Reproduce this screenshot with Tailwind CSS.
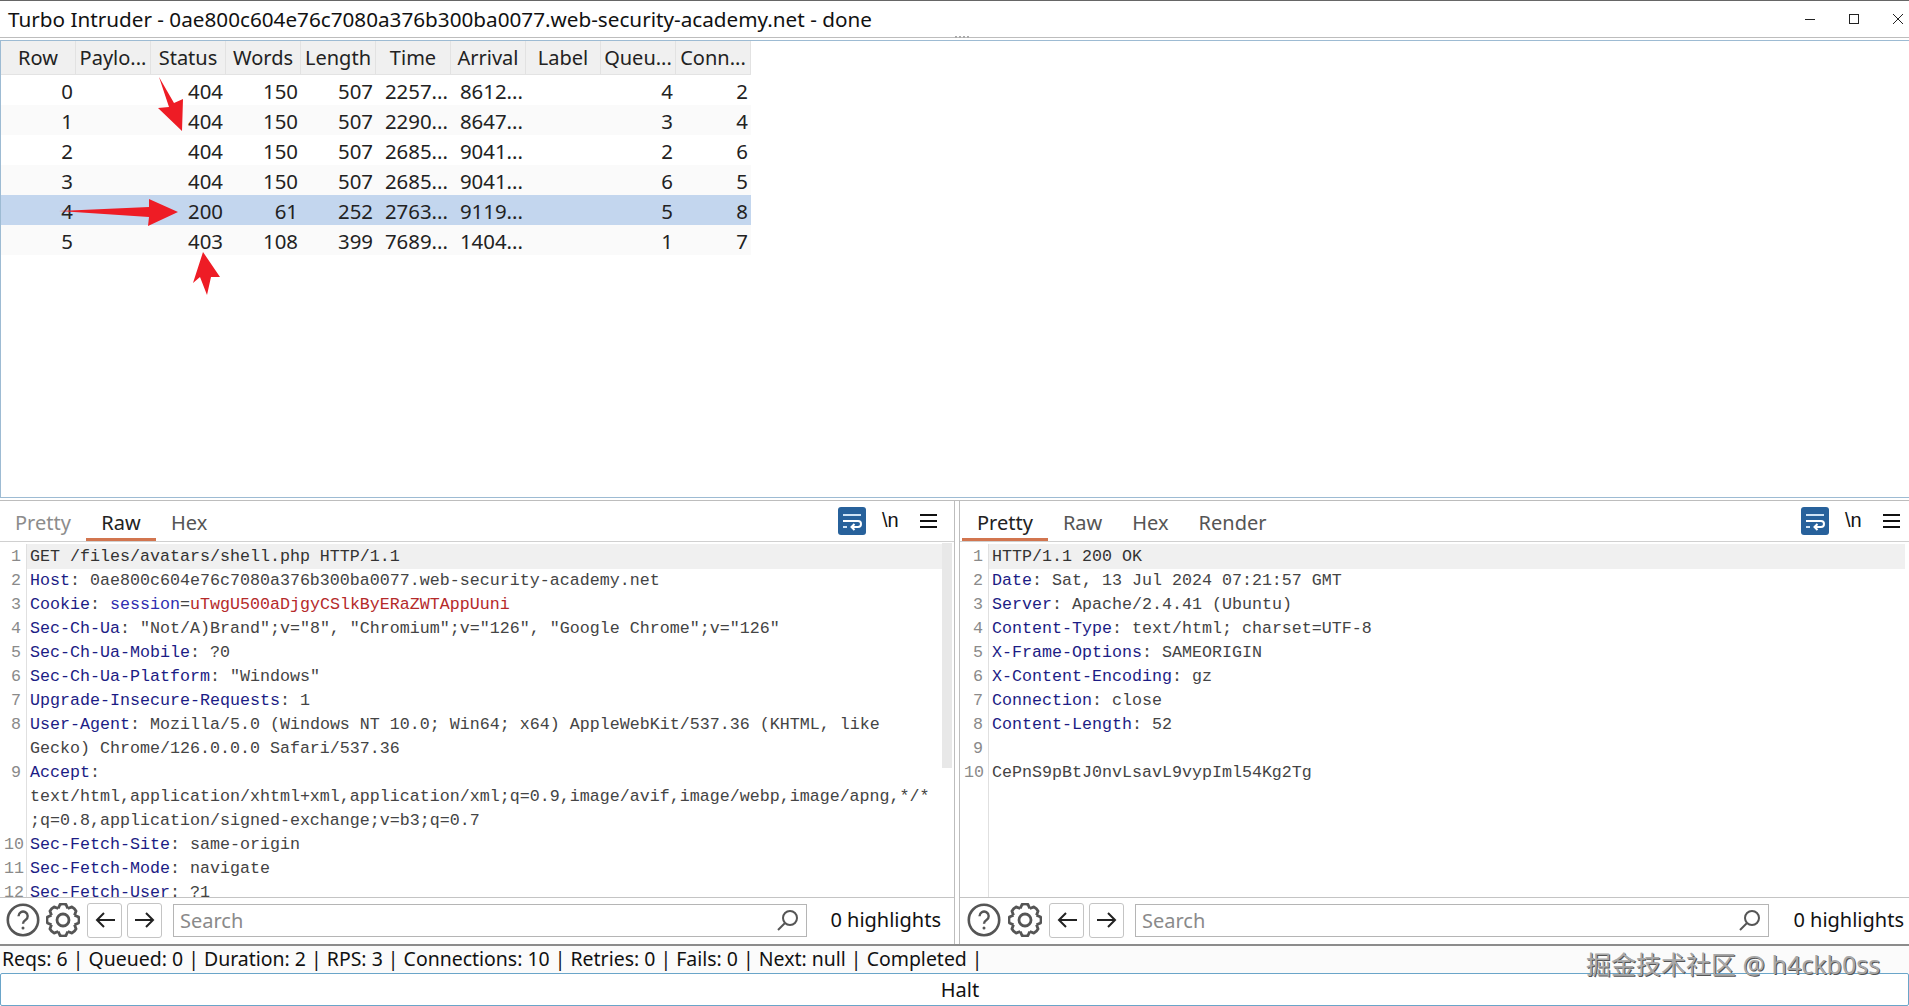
<!DOCTYPE html>
<html lang="en">
<head>
<meta charset="UTF-8">
<title>Turbo Intruder</title>
<script src="https://cdn.jsdelivr.net/npm/@tailwindcss/browser@4"></script>
</head>
<body class="bg-white text-black overflow-hidden">
<!-- shared icons -->
<svg class="hidden">
  <defs>
    <path id="tooth" d="M-4.8-11.5-2.9-15.6Q0-16.6 2.9-15.6L4.8-11.5" />
  </defs>
</svg>

<div class="relative w-[1909px] h-[1006px] flex flex-col overflow-hidden font-['Noto_Sans',sans-serif] text-[20px] leading-none">

  <!-- Title bar -->
  <header class="h-[38px] shrink-0 flex items-center justify-between border-t border-t-[#666] border-b border-b-[#bdbdbd] pl-2 pr-[6px] relative">
    <span class="text-[#111] text-[20.7px]">Turbo Intruder - 0ae800c604e76c7080a376b300ba0077.web-security-academy.net - done</span>
    <div class="flex items-center gap-[34px]">
      <svg class="w-[10px] h-[10px]" viewBox="0 0 10 10" fill="none" stroke="#222" stroke-width="1"><path d="M0 5.5h10"/></svg>
      <svg class="w-[10px] h-[10px]" viewBox="0 0 10 10" fill="none" stroke="#222" stroke-width="1"><rect x=".5" y=".5" width="9" height="9"/></svg>
      <svg class="w-[10px] h-[10px]" viewBox="0 0 10 10" fill="none" stroke="#222" stroke-width="1"><path d="M0 0l10 10M10 0L0 10"/></svg>
    </div>
    <div class="absolute left-[955px] -bottom-[1px] flex gap-[2px]">
      <i class="block w-[2px] h-[2px] bg-[#aaa]"></i><i class="block w-[2px] h-[2px] bg-[#aaa]"></i><i class="block w-[2px] h-[2px] bg-[#aaa]"></i><i class="block w-[2px] h-[2px] bg-[#aaa]"></i>
    </div>
  </header>

  <!-- Results table -->
  <section class="mt-[2px] h-[458px] shrink-0 border-l border-t border-b border-[#9dbbd3] relative">
    <div class="w-[750px] grid grid-cols-[repeat(10,75px)] h-[34px] bg-[#f0f0f0] border-b border-[#e3e3e3] text-center text-[#222] items-center">
      <div class="h-full flex items-center justify-center border-r border-[#e2e2e2]">Row</div>
      <div class="h-full flex items-center justify-center border-r border-[#e2e2e2]">Paylo...</div>
      <div class="h-full flex items-center justify-center border-r border-[#e2e2e2]">Status</div>
      <div class="h-full flex items-center justify-center border-r border-[#e2e2e2]">Words</div>
      <div class="h-full flex items-center justify-center border-r border-[#e2e2e2]">Length</div>
      <div class="h-full flex items-center justify-center border-r border-[#e2e2e2]">Time</div>
      <div class="h-full flex items-center justify-center border-r border-[#e2e2e2]">Arrival</div>
      <div class="h-full flex items-center justify-center border-r border-[#e2e2e2]">Label</div>
      <div class="h-full flex items-center justify-center border-r border-[#e2e2e2]">Queu...</div>
      <div class="h-full flex items-center justify-center border-r border-[#e2e2e2]">Conn...</div>
    </div>
    <div class="w-[750px] text-[#222] text-[20.4px]">
      <div class="grid grid-cols-[repeat(10,75px)] h-[30px] items-center text-right pt-[2px]">
        <div class="pr-[3px]">0</div><div></div><div class="pr-[3px]">404</div><div class="pr-[3px]">150</div><div class="pr-[3px]">507</div><div class="pr-[3px]">2257...</div><div class="pr-[3px]">8612...</div><div></div><div class="pr-[3px]">4</div><div class="pr-[3px]">2</div>
      </div>
      <div class="grid grid-cols-[repeat(10,75px)] h-[30px] items-center text-right pt-[2px] bg-[#fafafa]">
        <div class="pr-[3px]">1</div><div></div><div class="pr-[3px]">404</div><div class="pr-[3px]">150</div><div class="pr-[3px]">507</div><div class="pr-[3px]">2290...</div><div class="pr-[3px]">8647...</div><div></div><div class="pr-[3px]">3</div><div class="pr-[3px]">4</div>
      </div>
      <div class="grid grid-cols-[repeat(10,75px)] h-[30px] items-center text-right pt-[2px]">
        <div class="pr-[3px]">2</div><div></div><div class="pr-[3px]">404</div><div class="pr-[3px]">150</div><div class="pr-[3px]">507</div><div class="pr-[3px]">2685...</div><div class="pr-[3px]">9041...</div><div></div><div class="pr-[3px]">2</div><div class="pr-[3px]">6</div>
      </div>
      <div class="grid grid-cols-[repeat(10,75px)] h-[30px] items-center text-right pt-[2px] bg-[#fafafa]">
        <div class="pr-[3px]">3</div><div></div><div class="pr-[3px]">404</div><div class="pr-[3px]">150</div><div class="pr-[3px]">507</div><div class="pr-[3px]">2685...</div><div class="pr-[3px]">9041...</div><div></div><div class="pr-[3px]">6</div><div class="pr-[3px]">5</div>
      </div>
      <div class="grid grid-cols-[repeat(10,75px)] h-[30px] items-center text-right pt-[2px] bg-[#c3d6ee]">
        <div class="pr-[3px]">4</div><div></div><div class="pr-[3px]">200</div><div class="pr-[3px]">61</div><div class="pr-[3px]">252</div><div class="pr-[3px]">2763...</div><div class="pr-[3px]">9119...</div><div></div><div class="pr-[3px]">5</div><div class="pr-[3px]">8</div>
      </div>
      <div class="grid grid-cols-[repeat(10,75px)] h-[30px] items-center text-right pt-[2px] bg-[#fafafa]">
        <div class="pr-[3px]">5</div><div></div><div class="pr-[3px]">403</div><div class="pr-[3px]">108</div><div class="pr-[3px]">399</div><div class="pr-[3px]">7689...</div><div class="pr-[3px]">1404...</div><div></div><div class="pr-[3px]">1</div><div class="pr-[3px]">7</div>
      </div>
    </div>
  </section>

  <!-- Request / response panes -->
  <div class="mt-[2px] h-[444px] shrink-0 flex border-t border-[#bdbdbd]">

    <!-- Request -->
    <div class="w-[955px] shrink-0 flex flex-col border-r border-[#bdbdbd]">
      <div class="h-[41px] shrink-0 flex items-center justify-between border-b border-[#d0d0d0] pr-[17px]">
        <div class="flex h-full">
          <span class="w-[86px] pl-[15px] flex items-center text-[#8c8c8c] pt-[4px]">Pretty</span>
          <span class="w-[70px] justify-center flex items-center text-[#222] border-b-[3px] border-[#d2754f] pt-[7px]">Raw</span>
          <span class="w-[70px] pl-[15px] flex items-center text-[#555] pt-[4px]">Hex</span>
        </div>
        <div class="flex items-center">
          <svg class="w-[28px] h-[28px]" viewBox="0 0 28 28" fill="none">
            <rect width="28" height="28" rx="3" fill="#27619b"/>
            <path d="M5 8h18" stroke="#cfe3f5" stroke-width="2"/>
            <path d="M5 14h15a3 3 0 0 1 0 6h-6M16.5 17l-3 3 3 3" stroke="#fff" stroke-width="2"/>
            <path d="M5 20h4" stroke="#cfe3f5" stroke-width="2"/>
          </svg>
          <span class="ml-[16px] w-[23px] font-['Liberation_Sans',sans-serif] pb-[3px] text-[#111]">\n</span>
          <svg class="ml-[15px] w-[17px] h-[14px]" viewBox="0 0 17 14" stroke="#111" stroke-width="2"><path d="M0 1h17M0 7h17M0 13h17"/></svg>
        </div>
      </div>

      <div class="flex-1 flex min-h-0 pr-[2px] overflow-hidden font-['Liberation_Mono',monospace] text-[16.67px] leading-[24px] text-[#444]">
        <div class="flex-1 min-w-0 pt-[2px]">
          <div class="flex"><span class="w-[27px] shrink-0 pr-[5px] pt-[1px] text-right text-[#8a8a8a] border-r border-[#e0e0e0]">1</span><span class="flex-1 pl-[3px] pt-[1px] bg-[#f0f0f0] text-[#333]">GET /files/avatars/shell.php HTTP/1.1</span></div>
          <div class="flex"><span class="w-[27px] shrink-0 pr-[5px] text-right text-[#8a8a8a] border-r border-[#e0e0e0]">2</span><span class="flex-1 pl-[3px]"><b class="font-normal text-[#1c1c85]">Host</b>: 0ae800c604e76c7080a376b300ba0077.web-security-academy.net</span></div>
          <div class="flex"><span class="w-[27px] shrink-0 pr-[5px] text-right text-[#8a8a8a] border-r border-[#e0e0e0]">3</span><span class="flex-1 pl-[3px]"><b class="font-normal text-[#1c1c85]">Cookie</b>: <b class="font-normal text-[#2e2eb0]">session</b>=<b class="font-normal text-[#b52a2a]">uTwgU500aDjgyCSlkByERaZWTAppUuni</b></span></div>
          <div class="flex"><span class="w-[27px] shrink-0 pr-[5px] text-right text-[#8a8a8a] border-r border-[#e0e0e0]">4</span><span class="flex-1 pl-[3px]"><b class="font-normal text-[#1c1c85]">Sec-Ch-Ua</b>: "Not/A)Brand";v="8", "Chromium";v="126", "Google Chrome";v="126"</span></div>
          <div class="flex"><span class="w-[27px] shrink-0 pr-[5px] text-right text-[#8a8a8a] border-r border-[#e0e0e0]">5</span><span class="flex-1 pl-[3px]"><b class="font-normal text-[#1c1c85]">Sec-Ch-Ua-Mobile</b>: ?0</span></div>
          <div class="flex"><span class="w-[27px] shrink-0 pr-[5px] text-right text-[#8a8a8a] border-r border-[#e0e0e0]">6</span><span class="flex-1 pl-[3px]"><b class="font-normal text-[#1c1c85]">Sec-Ch-Ua-Platform</b>: "Windows"</span></div>
          <div class="flex"><span class="w-[27px] shrink-0 pr-[5px] text-right text-[#8a8a8a] border-r border-[#e0e0e0]">7</span><span class="flex-1 pl-[3px]"><b class="font-normal text-[#1c1c85]">Upgrade-Insecure-Requests</b>: 1</span></div>
          <div class="flex"><span class="w-[27px] shrink-0 pr-[5px] text-right text-[#8a8a8a] border-r border-[#e0e0e0]">8</span><span class="flex-1 pl-[3px]"><b class="font-normal text-[#1c1c85]">User-Agent</b>: Mozilla/5.0 (Windows NT 10.0; Win64; x64) AppleWebKit/537.36 (KHTML, like<br>Gecko) Chrome/126.0.0.0 Safari/537.36</span></div>
          <div class="flex"><span class="w-[27px] shrink-0 pr-[5px] text-right text-[#8a8a8a] border-r border-[#e0e0e0]">9</span><span class="flex-1 pl-[3px]"><b class="font-normal text-[#1c1c85]">Accept</b>:<br>text/html,application/xhtml+xml,application/xml;q=0.9,image/avif,image/webp,image/apng,*/*<br>;q=0.8,application/signed-exchange;v=b3;q=0.7</span></div>
          <div class="flex"><span class="w-[27px] shrink-0 pr-[2px] text-right text-[#8a8a8a] border-r border-[#e0e0e0]">10</span><span class="flex-1 pl-[3px]"><b class="font-normal text-[#1c1c85]">Sec-Fetch-Site</b>: same-origin</span></div>
          <div class="flex"><span class="w-[27px] shrink-0 pr-[2px] text-right text-[#8a8a8a] border-r border-[#e0e0e0]">11</span><span class="flex-1 pl-[3px]"><b class="font-normal text-[#1c1c85]">Sec-Fetch-Mode</b>: navigate</span></div>
          <div class="flex"><span class="w-[27px] shrink-0 pr-[2px] text-right text-[#8a8a8a] border-r border-[#e0e0e0]">12</span><span class="flex-1 pl-[3px]"><b class="font-normal text-[#1c1c85]">Sec-Fetch-User</b>: ?1</span></div>
        </div>
        <div class="w-[10px] shrink-0 pt-[1px]"><div class="h-[225px] bg-[#e8e8e8]"></div></div>
      </div>

      <div class="h-[47px] shrink-0 flex items-center border-t border-[#c4c4c4] pl-[6px] pr-[13px] pb-[2px]">
        <svg class="w-[34px] h-[34px] shrink-0" viewBox="0 0 34 34" fill="none" stroke="#555" stroke-width="2.6"><circle cx="17" cy="17" r="15.2"/><path d="M12.5 13.2a4.6 4.6 0 1 1 7 3.9c-1.6 1-2.5 1.9-2.5 3.7" stroke-width="2.4"/><circle cx="17" cy="25" r="1.5" fill="#555" stroke="none"/></svg>
        <svg class="ml-[6px] w-[34px] h-[34px] shrink-0" viewBox="-17 -17 34 34" fill="none" stroke="#555" stroke-width="2.8" stroke-linejoin="round"><use href="#tooth"/><use href="#tooth" transform="rotate(45)"/><use href="#tooth" transform="rotate(90)"/><use href="#tooth" transform="rotate(135)"/><use href="#tooth" transform="rotate(180)"/><use href="#tooth" transform="rotate(225)"/><use href="#tooth" transform="rotate(270)"/><use href="#tooth" transform="rotate(315)"/><circle r="6"/></svg>
        <button class="ml-[7px] w-[35px] h-[35px] shrink-0 flex items-center justify-center border border-[#c4c4c4] rounded-[3px]"><svg class="w-[20px] h-[18px]" viewBox="0 0 20 18" fill="none" stroke="#222" stroke-width="2"><path d="M20 9H2M9 2 2 9l7 7"/></svg></button>
        <button class="ml-[5px] w-[35px] h-[35px] shrink-0 flex items-center justify-center border border-[#c4c4c4] rounded-[3px]"><svg class="w-[20px] h-[18px]" viewBox="0 0 20 18" fill="none" stroke="#222" stroke-width="2"><path d="M0 9h18M11 2l7 7-7 7"/></svg></button>
        <div class="ml-[11px] w-[634px] h-[33px] shrink-0 flex items-center border border-[#b5b5b5] pl-[6px] pr-[7px]">
          <input class="flex-1 min-w-0 outline-none bg-transparent placeholder:text-[#8a8a8a]" placeholder="Search">
          <svg class="w-[22px] h-[22px]" viewBox="0 0 22 22" fill="none" stroke="#555" stroke-width="2"><circle cx="13" cy="9" r="7"/><path d="M8 14 1 21"/></svg>
        </div>
        <span class="ml-auto text-[#111]">0 highlights</span>
      </div>
    </div>

    <div class="w-[4px] shrink-0"></div>

    <!-- Response -->
    <div class="flex-1 min-w-0 flex flex-col border-l border-[#bdbdbd]">
      <div class="h-[41px] shrink-0 flex items-center justify-between border-b border-[#d0d0d0] pr-[9px]">
        <div class="flex h-full pl-[2px]">
          <span class="px-[15px] flex items-center text-[#222] border-b-[3px] border-[#d2754f] pt-[7px]">Pretty</span>
          <span class="px-[15px] flex items-center text-[#555] pt-[4px]">Raw</span>
          <span class="px-[15px] flex items-center text-[#555] pt-[4px]">Hex</span>
          <span class="px-[15px] flex items-center text-[#555] pt-[4px]">Render</span>
        </div>
        <div class="flex items-center">
          <svg class="w-[28px] h-[28px]" viewBox="0 0 28 28" fill="none">
            <rect width="28" height="28" rx="3" fill="#27619b"/>
            <path d="M5 8h18" stroke="#cfe3f5" stroke-width="2"/>
            <path d="M5 14h15a3 3 0 0 1 0 6h-6M16.5 17l-3 3 3 3" stroke="#fff" stroke-width="2"/>
            <path d="M5 20h4" stroke="#cfe3f5" stroke-width="2"/>
          </svg>
          <span class="ml-[16px] w-[23px] font-['Liberation_Sans',sans-serif] pb-[3px] text-[#111]">\n</span>
          <svg class="ml-[15px] w-[17px] h-[14px]" viewBox="0 0 17 14" stroke="#111" stroke-width="2"><path d="M0 1h17M0 7h17M0 13h17"/></svg>
        </div>
      </div>

      <div class="flex-1 flex min-h-0 pr-[4px] overflow-hidden font-['Liberation_Mono',monospace] text-[16.67px] leading-[24px] text-[#444]">
        <div class="flex-1 min-w-0 pt-[2px]">
          <div class="flex"><span class="w-[29px] shrink-0 pr-[5px] pt-[1px] text-right text-[#8a8a8a] border-r border-[#e0e0e0]">1</span><span class="flex-1 pl-[3px] pt-[1px] bg-[#f0f0f0] text-[#333]">HTTP/1.1 200 OK</span></div>
          <div class="flex"><span class="w-[29px] shrink-0 pr-[5px] text-right text-[#8a8a8a] border-r border-[#e0e0e0]">2</span><span class="flex-1 pl-[3px]"><b class="font-normal text-[#1c1c85]">Date</b>: Sat, 13 Jul 2024 07:21:57 GMT</span></div>
          <div class="flex"><span class="w-[29px] shrink-0 pr-[5px] text-right text-[#8a8a8a] border-r border-[#e0e0e0]">3</span><span class="flex-1 pl-[3px]"><b class="font-normal text-[#1c1c85]">Server</b>: Apache/2.4.41 (Ubuntu)</span></div>
          <div class="flex"><span class="w-[29px] shrink-0 pr-[5px] text-right text-[#8a8a8a] border-r border-[#e0e0e0]">4</span><span class="flex-1 pl-[3px]"><b class="font-normal text-[#1c1c85]">Content-Type</b>: text/html; charset=UTF-8</span></div>
          <div class="flex"><span class="w-[29px] shrink-0 pr-[5px] text-right text-[#8a8a8a] border-r border-[#e0e0e0]">5</span><span class="flex-1 pl-[3px]"><b class="font-normal text-[#1c1c85]">X-Frame-Options</b>: SAMEORIGIN</span></div>
          <div class="flex"><span class="w-[29px] shrink-0 pr-[5px] text-right text-[#8a8a8a] border-r border-[#e0e0e0]">6</span><span class="flex-1 pl-[3px]"><b class="font-normal text-[#1c1c85]">X-Content-Encoding</b>: gz</span></div>
          <div class="flex"><span class="w-[29px] shrink-0 pr-[5px] text-right text-[#8a8a8a] border-r border-[#e0e0e0]">7</span><span class="flex-1 pl-[3px]"><b class="font-normal text-[#1c1c85]">Connection</b>: close</span></div>
          <div class="flex"><span class="w-[29px] shrink-0 pr-[5px] text-right text-[#8a8a8a] border-r border-[#e0e0e0]">8</span><span class="flex-1 pl-[3px]"><b class="font-normal text-[#1c1c85]">Content-Length</b>: 52</span></div>
          <div class="flex"><span class="w-[29px] shrink-0 pr-[5px] text-right text-[#8a8a8a] border-r border-[#e0e0e0]">9</span><span class="flex-1 pl-[3px]">&nbsp;</span></div>
          <div class="flex"><span class="w-[29px] shrink-0 pr-[4px] text-right text-[#8a8a8a] border-r border-[#e0e0e0]">10</span><span class="flex-1 pl-[3px]">CePnS9pBtJ0nvLsavL9vypIml54Kg2Tg</span></div>
          <div class="flex h-[240px]"><span class="w-[29px] shrink-0 border-r border-[#e0e0e0]"></span></div>
        </div>
      </div>

      <div class="h-[47px] shrink-0 flex items-center border-t border-[#c4c4c4] pl-[6px] pr-[5px] pb-[2px]">
        <svg class="ml-[1px] w-[34px] h-[34px] shrink-0" viewBox="0 0 34 34" fill="none" stroke="#555" stroke-width="2.6"><circle cx="17" cy="17" r="15.2"/><path d="M12.5 13.2a4.6 4.6 0 1 1 7 3.9c-1.6 1-2.5 1.9-2.5 3.7" stroke-width="2.4"/><circle cx="17" cy="25" r="1.5" fill="#555" stroke="none"/></svg>
        <svg class="ml-[7px] w-[34px] h-[34px] shrink-0" viewBox="-17 -17 34 34" fill="none" stroke="#555" stroke-width="2.8" stroke-linejoin="round"><use href="#tooth"/><use href="#tooth" transform="rotate(45)"/><use href="#tooth" transform="rotate(90)"/><use href="#tooth" transform="rotate(135)"/><use href="#tooth" transform="rotate(180)"/><use href="#tooth" transform="rotate(225)"/><use href="#tooth" transform="rotate(270)"/><use href="#tooth" transform="rotate(315)"/><circle r="6"/></svg>
        <button class="ml-[7px] w-[35px] h-[35px] shrink-0 flex items-center justify-center border border-[#c4c4c4] rounded-[3px]"><svg class="w-[20px] h-[18px]" viewBox="0 0 20 18" fill="none" stroke="#222" stroke-width="2"><path d="M20 9H2M9 2 2 9l7 7"/></svg></button>
        <button class="ml-[5px] w-[35px] h-[35px] shrink-0 flex items-center justify-center border border-[#c4c4c4] rounded-[3px]"><svg class="w-[20px] h-[18px]" viewBox="0 0 20 18" fill="none" stroke="#222" stroke-width="2"><path d="M0 9h18M11 2l7 7-7 7"/></svg></button>
        <div class="ml-[11px] w-[634px] h-[33px] shrink-0 flex items-center border border-[#b5b5b5] pl-[6px] pr-[7px]">
          <input class="flex-1 min-w-0 outline-none bg-transparent placeholder:text-[#8a8a8a]" placeholder="Search">
          <svg class="w-[22px] h-[22px]" viewBox="0 0 22 22" fill="none" stroke="#555" stroke-width="2"><circle cx="13" cy="9" r="7"/><path d="M8 14 1 21"/></svg>
        </div>
        <span class="ml-auto text-[#111]">0 highlights</span>
      </div>
    </div>
  </div>

  <!-- Status bar -->
  <div class="h-[29px] shrink-0 flex items-center border-t-2 border-[#8c8c8c] pl-[2px] pb-[2px] bg-[#fbfbfb] text-[#111] text-[19.47px]">Reqs: 6 | Queued: 0 | Duration: 2 | RPS: 3 | Connections: 10 | Retries: 0 | Fails: 0 | Next: null | Completed |</div>
  <button class="h-[33px] shrink-0 border border-[#6aa5c9] rounded-[2px] text-[#111] pl-[11px]">Halt</button>

  <!-- Annotation arrows drawn over the table -->
  <svg class="absolute left-0 top-0 pointer-events-none" width="260" height="310" fill="#ee1c25">
    <polygon points="159,77 174,103 183,99 182,131 158,108 169,107"/>
    <polygon points="59,211 149,207 149,199 178,212 148,226 149,217"/>
    <polygon points="203,252 220,277 211,277 207,295 200,277 193,283"/>
  </svg>

  <!-- Watermark -->
  <span class="absolute left-[1586px] top-[950px] text-[25px] leading-[28px] text-[#a8a8a8] font-['Noto_Sans','Noto_Sans_CJK_SC',sans-serif] [text-shadow:1px_1px_0_#555] whitespace-nowrap">掘金技术社区 @ h4ckb0ss</span>
</div>
</body>
</html>
